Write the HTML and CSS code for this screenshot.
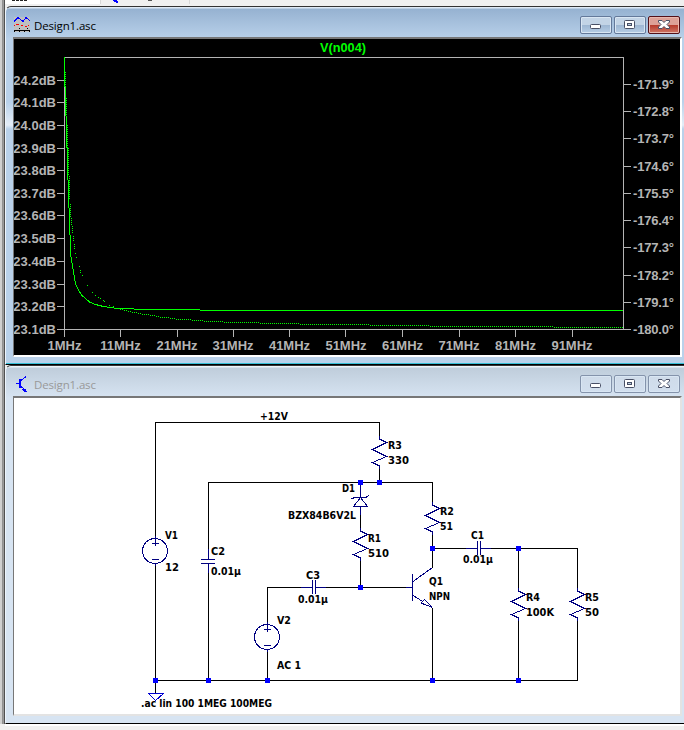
FILE: index.html
```html
<!DOCTYPE html>
<html lang="en">
<head>
<meta charset="utf-8">
<title>Design1.asc</title>
<link rel="stylesheet" href="styles.css">
</head>
<body>
<div class="app">
  <div class="gutter"></div>
  <main class="workspace">
    <svg class="tabs" width="679" height="6" viewBox="5 0 679 6" shape-rendering="crispEdges">
      <rect x="5" y="0" width="95" height="4" fill="#fff"/>
      <path d="M12 0h15" stroke="#222" stroke-width="2" stroke-dasharray="3 1"/>
      <path d="M113 0h4v1h1v2h-2v-1h-2z" fill="#00f"/>
      <path d="M148 .5h4" stroke="#555"/>
      <path d="M100.500 0v4M189.500 0v4" stroke="#d8d8d8"/>
    </svg>

    <section class="window active">
      <header class="titlebar">
        <svg class="icon" width="16" height="16" viewBox="0 0 16 16" shape-rendering="crispEdges">
          <rect width="16" height="15" fill="#c0c0c0"/>
          <path d="M0 4.500L1 3.500L4 .5L9 4.500L12 .5L16 4" fill="none" stroke="#00f"/>
          <path d="M2 7h3v1H2zM0 8h1v1H0zM7 8h2v1H7zM11 9h2v1h-2zM14 8h1v1h-1z" fill="#f00"/>
          <path d="M0 13h16v1H0zM0 14h1v1H0zM5 14h1v1H5zM10 14h1v1h-1zM15 14h1v1h-1zM5 11h1v1H5zM13 11h1v1h-1z" fill="#000"/>
        </svg>
        <h1 class="title">Design1.asc</h1>
        <div class="controls">
          <button class="control" aria-label="Minimize"><svg width="30" height="16" viewBox="0 0 30 16"><rect x="9.500" y="7.500" width="10" height="4" rx="1" fill="#fff" stroke="#484f65"/></svg></button>
          <button class="control" aria-label="Maximize"><svg width="30" height="16" viewBox="0 0 30 16"><rect x="9.500" y="3.500" width="10" height="8" rx="1" fill="#fff" stroke="#484f65"/><rect x="12.500" y="6.500" width="4" height="2" fill="#b9cce0" stroke="#484f65"/></svg></button>
          <button class="control close" aria-label="Close"><svg width="30" height="16" viewBox="0 0 30 16"><path d="M9.500 3.500h3.500l2 2l2-2h3.500v1.500l-2.500 2.500l2.500 2.500v1.500H17l-2-2l-2 2H9.500v-1.500L12 7.500L9.500 5z" fill="#fff" stroke="#484f65"/></svg></button>
        </div>
      </header>
      <div class="client">
        <svg class="plot" width="666" height="316" viewBox="14 39 666 316">
          <g class="axis" shape-rendering="crispEdges">
            <rect x="64.500" y="57.500" width="559" height="272"/>
            <path d="M57 80.500h7M57 102.500h7M57 125.500h7M57 148.500h7M57 170.500h7M57 193.500h7M57 215.500h7M57 238.500h7M57 261.500h7M57 284.500h7M57 306.500h7M57 329.500h7"/>
            <path d="M624 84.500h7M624 111.500h7M624 138.500h7M624 166.500h7M624 193.500h7M624 220.500h7M624 247.500h7M624 275.500h7M624 302.500h7M624 329.500h7"/>
            <path d="M64.500 329v8M120.500 329v8M177.500 329v8M233.500 329v8M289.500 329v8M345.500 329v8M402.500 329v8M459.500 329v8M515.500 329v8M572.500 329v8"/>
          </g>
          <g class="trace" shape-rendering="crispEdges">
            <path d="M64.500 57V87M65.500 87V116M66.500 116V148M67.500 148V180M68.500 180V208M69.500 208V235M70.500 235V254L71.500 260L73.500 272L75.500 284L78.500 290L81.500 295L85.500 298.500L89.500 302L95.500 304.500L103.500 306.500L110.500 307.500L117.500 308.500H133.500L134.500 309.500H199.500L200.500 310.500H623"/>
            <path class="phase" d="M65.500 72V98M66.500 98V116M67.500 125V148M68.500 148V176M69.500 176V200M70.500 204V218M71.500 218V226M72.500 226V234M73.500 236V241M74.500 244V249M75.500 253V254M76.500 257V258M79.500 266V267M80.500 270V273M82.500 275V276"/>
            <path d="M87 285.500h1M92 292.500h1M95 295.500h1M98 297.500h1M100 298.500h1M103 300.500h1M104 301.500h1M109 305.500h1M113 306.500h1M116 308.500h1"/>
            <path class="phase" d="M120 309.500h4M124 310.500h3M128 311.500h4M132 312.500h6M138 313.500h4M142 314.500h8M150 315.500h6M156 316.500h4M160 317.500h10M170 318.500h6M176 319.500h16M192 320.500h12M204 321.500h20M224 322.500h36M260 323.500h40M300 324.500h70M370 325.500h60M430 326.500h124M554 327.500h69"/>
          </g>
          <text class="signal" x="343" y="52" textLength="46" lengthAdjust="spacingAndGlyphs">V(n004)</text>
          <g class="scale left">
            <text x="56" y="85">24.2dB</text><text x="56" y="107">24.1dB</text><text x="56" y="130">24.0dB</text><text x="56" y="153">23.9dB</text><text x="56" y="175">23.8dB</text><text x="56" y="198">23.7dB</text><text x="56" y="220">23.6dB</text><text x="56" y="243">23.5dB</text><text x="56" y="266">23.4dB</text><text x="56" y="289">23.3dB</text><text x="56" y="311">23.2dB</text><text x="56" y="334">23.1dB</text>
          </g>
          <g class="scale right">
            <text x="633" y="89" textLength="41">-171.9°</text><text x="633" y="116" textLength="41">-172.8°</text><text x="633" y="143" textLength="41">-173.7°</text><text x="633" y="171" textLength="41">-174.6°</text><text x="633" y="198" textLength="41">-175.5°</text><text x="633" y="225" textLength="41">-176.4°</text><text x="633" y="252" textLength="41">-177.3°</text><text x="633" y="280" textLength="41">-178.2°</text><text x="633" y="307" textLength="41">-179.1°</text><text x="633" y="334" textLength="41">-180.0°</text>
          </g>
          <g class="scale bottom">
            <text x="64.500" y="350">1MHz</text><text x="120.500" y="350">11MHz</text><text x="177" y="350">21MHz</text><text x="233" y="350">31MHz</text><text x="289.500" y="350">41MHz</text><text x="346" y="350">51MHz</text><text x="402.500" y="350">61MHz</text><text x="459" y="350">71MHz</text><text x="515.500" y="350">81MHz</text><text x="572" y="350">91MHz</text>
          </g>
        </svg>
      </div>
    </section>

    <section class="window inactive">
      <header class="titlebar">
        <svg class="icon" width="16" height="16" viewBox="0 0 16 16" shape-rendering="crispEdges">
          <path d="M2 7h3v1H2zM5 3h2v9H5zM9 12h1v1h1v1h1v1h1v1h-3v-1h-1v-1h-1v-1h1z" fill="#00f"/>
          <path d="M7 4.500L12 .5M7 10.500L12 14.500" fill="none" stroke="#00f"/>
        </svg>
        <h2 class="title">Design1.asc</h2>
        <div class="controls">
          <button class="control" aria-label="Minimize"><svg width="30" height="16" viewBox="0 0 30 16"><rect x="9.500" y="7.500" width="10" height="4" rx="1" fill="#fff" stroke="#484f65"/></svg></button>
          <button class="control" aria-label="Maximize"><svg width="30" height="16" viewBox="0 0 30 16"><rect x="9.500" y="3.500" width="10" height="8" rx="1" fill="#fff" stroke="#484f65"/><rect x="12.500" y="6.500" width="4" height="2" fill="#b9cce0" stroke="#484f65"/></svg></button>
          <button class="control" aria-label="Close"><svg width="30" height="16" viewBox="0 0 30 16"><path d="M9.500 3.500h3.500l2 2l2-2h3.500v1.500l-2.500 2.500l2.500 2.500v1.500H17l-2-2l-2 2H9.500v-1.500L12 7.500L9.500 5z" fill="#fff" stroke="#484f65"/></svg></button>
        </div>
      </header>
      <div class="client">
        <svg class="schematic" width="666" height="316" viewBox="14 398 666 316">
          <defs>
            <path id="resistor" d="M.5-3V0L7.500 3.500L-6.500 10.500L7.500 17.500L-6.500 23.500L.5 27V30"/>
            <g id="source"><circle cx="0" cy="0" r="12.500"/><path d="M.5-15V-5M-3.500-7.500H4M-3.500 8.500H4M.5 13V15"/></g>
            <path id="capacitor" d="M-11 .5H0M.5-7V7M3.500-7V7M4 .5H14"/>
          </defs>
          <g class="wires" shape-rendering="crispEdges">
            <path d="M155.500 537V422.500H379.500V437M379.500 468V482.500M208.500 549V482.500H432.500V503M432.500 534V567.500M360.500 515V530M360.500 560V587.500M432.500 548.500H466M491 548.500H577.500V589M577.500 620V680.500H155.500M518.500 548.500V589M518.500 620V680.500M432.500 608V680.500M406 587.500H326M302 587.500H267.500V623M267.500 651V680.500M208.500 573V680.500M155.500 565V693.500"/>
          </g>
          <g class="parts" shape-rendering="crispEdges">
            <use href="#resistor" x="379" y="439"/>
            <use href="#resistor" x="432" y="505"/>
            <use href="#resistor" x="360" y="531"/>
            <use href="#resistor" x="518" y="591"/>
            <use href="#resistor" x="577" y="591"/>
            <use href="#source" x="155" y="551"/>
            <use href="#source" x="267" y="637"/>
            <use href="#capacitor" x="477" y="548"/>
            <use href="#capacitor" x="312" y="587"/>
            <path d="M208.500 549V559M201 559.500H215M201 563.500H215M208.500 564V573"/>
            <path d="M360.500 483V497M360.500 507V515M351.500 499L354.500 497.500H366L369 495M360.500 497.500L367.500 506.500H353.500Z"/>
            <path d="M406 587.500H412M412.500 574V601M413 581.500L432.500 567.500M413 595.500L422 601M432.500 607.500L424.500 599.500L421 603L432.500 607.500"/>
            <path class="ground" d="M148.500 693.500H163.500L155.500 700.500Z"/>
          </g>
          <path class="nodes" shape-rendering="crispEdges" d="M358 480h5v5h-5zM377 480h5v5h-5zM430 546h5v5h-5zM516 546h5v5h-5zM358 585h5v5h-5zM153 678h5v5h-5zM206 678h5v5h-5zM265 678h5v5h-5zM430 678h5v5h-5zM516 678h5v5h-5z"/>
          <g class="labels">
            <text x="260" y="420" textLength="28" lengthAdjust="spacingAndGlyphs">+12V</text>
            <text x="388" y="449" textLength="14" lengthAdjust="spacingAndGlyphs">R3</text>
            <text x="388" y="464" textLength="21" lengthAdjust="spacingAndGlyphs">330</text>
            <text x="342" y="492" textLength="13" lengthAdjust="spacingAndGlyphs">D1</text>
            <text x="288" y="519" textLength="68" lengthAdjust="spacingAndGlyphs">BZX84B6V2L</text>
            <text x="440" y="515" textLength="14" lengthAdjust="spacingAndGlyphs">R2</text>
            <text x="440" y="530" textLength="13" lengthAdjust="spacingAndGlyphs">51</text>
            <text x="368" y="542" textLength="13" lengthAdjust="spacingAndGlyphs">R1</text>
            <text x="368" y="557" textLength="21" lengthAdjust="spacingAndGlyphs">510</text>
            <text x="165" y="539" textLength="13" lengthAdjust="spacingAndGlyphs">V1</text>
            <text x="165" y="571" textLength="14" lengthAdjust="spacingAndGlyphs">12</text>
            <text x="211" y="555" textLength="14" lengthAdjust="spacingAndGlyphs">C2</text>
            <text x="211" y="575" textLength="30" lengthAdjust="spacingAndGlyphs">0.01µ</text>
            <text x="471" y="539" textLength="13" lengthAdjust="spacingAndGlyphs">C1</text>
            <text x="463" y="563" textLength="30" lengthAdjust="spacingAndGlyphs">0.01µ</text>
            <text x="306" y="579" textLength="14" lengthAdjust="spacingAndGlyphs">C3</text>
            <text x="298" y="603" textLength="30" lengthAdjust="spacingAndGlyphs">0.01µ</text>
            <text x="429" y="585" textLength="14" lengthAdjust="spacingAndGlyphs">Q1</text>
            <text x="429" y="600" textLength="21" lengthAdjust="spacingAndGlyphs">NPN</text>
            <text x="526" y="601" textLength="14" lengthAdjust="spacingAndGlyphs">R4</text>
            <text x="526" y="616" textLength="28" lengthAdjust="spacingAndGlyphs">100K</text>
            <text x="585" y="601" textLength="14" lengthAdjust="spacingAndGlyphs">R5</text>
            <text x="585" y="616" textLength="14" lengthAdjust="spacingAndGlyphs">50</text>
            <text x="277" y="624" textLength="14" lengthAdjust="spacingAndGlyphs">V2</text>
            <text x="277" y="669" textLength="24" lengthAdjust="spacingAndGlyphs">AC 1</text>
            <text x="141" y="707" textLength="131" lengthAdjust="spacingAndGlyphs">.ac lin 100 1MEG 100MEG</text>
          </g>
        </svg>
      </div>
    </section>
    <div class="status"></div>
  </main>
</div>
</body>
</html>
```
FILE: styles.css
```css
* {
  box-sizing: border-box;
}

body {
  margin: 0;
  background: #f0f0f0;
  font-family: "Open Sans", sans-serif;
}

svg {
  display: block;
}

.app {
  display: flex;
  width: 684px;
  height: 730px;
  overflow: hidden;
}

.gutter {
  flex: none;
  width: 5px;
  height: 724px;
  background: linear-gradient(90deg, #d0d0d0 2px, #8c8c8c 2px, #a0a0a0 4px, #505050 4px);
}

.workspace {
  flex: none;
  width: 679px;
}

.window {
  height: 359px;
  padding: 1px 2px 8px 7px;
  border-top: 1px solid #333;
  border-bottom: 1px solid #000;
  border-left: 1px solid #eef5fc;
  border-top-left-radius: 6px;
}

.active {
  background: linear-gradient(#dfeaf6 1px, #96b2d1 2px, #b9d1ea 32px, #b9d1ea 95px, #e4edf7 118px, #b9d1ea 122px, #b9d1ea 356px, #35bfd6 356px);
}

.inactive {
  background: linear-gradient(#eff4fa 1px, #bfcddb 2px, #d7e4f2 32px, #d7e4f2);
}

.titlebar {
  display: flex;
  align-items: center;
  height: 29px;
  padding: 7px 0 0 1px;
}

.titlebar .icon {
  flex: none;
  margin: -2px 0 0;
}

.title {
  flex: 1;
  margin: -1px 0 0 4px;
  font-size: 11.500px;
  font-weight: 400;
  letter-spacing: -0.150px;
  color: #000;
}

.inactive .title {
  color: #999;
}

.controls {
  display: flex;
  gap: 2px;
  margin: -3px 2px 0 0;
}

.control {
  width: 32px;
  height: 18px;
  padding: 0;
  border: 1px solid #64799a;
  border-radius: 2px;
  background: linear-gradient(#c3d4e6 50%, #9db6d2 50%, #b6cde5);
  box-shadow: inset 0 0 0 1px #d9e6f3;
}

.inactive .control {
  border-color: #8493ab;
  background: linear-gradient(#cfdbe9, #d2dfee);
}

.control.close {
  border-color: #531018;
  background: linear-gradient(#dda197 50%, #b5392a 50%, #cf7766);
  box-shadow: inset 0 0 0 1px #e9b8ae;
}

.client {
  width: 669px;
  height: 320px;
  border: 2px solid #fff;
  border-top-color: #777;
  border-left: 1px solid #777;
}

.active .client {
  background: #000;
}

.inactive .client {
  background: #fff;
  border-right-color: #e3e3e3;
  border-bottom-color: #e3e3e3;
}

.axis {
  fill: none;
  stroke: #b4b4b4;
}

.trace {
  fill: none;
  stroke: #0f0;
}

.phase {
  stroke-dasharray: 1 1;
}

.scale,
.signal {
  font: bold 13px "Liberation Sans", sans-serif;
  fill: #b4b4b4;
}

.signal {
  fill: #0f0;
}

.left {
  text-anchor: end;
}

.bottom,
.signal {
  text-anchor: middle;
}

.wires {
  fill: none;
  stroke: #000;
}

.parts {
  fill: none;
  stroke: #000080;
}

.ground {
  stroke: #0000d0;
}

.nodes {
  fill: #00f;
}

.labels text {
  font: bold 10px "DejaVu Sans", sans-serif;
  fill: #000;
}

.status {
  height: 6px;
  border-top: 2px solid #fff;
}
```
